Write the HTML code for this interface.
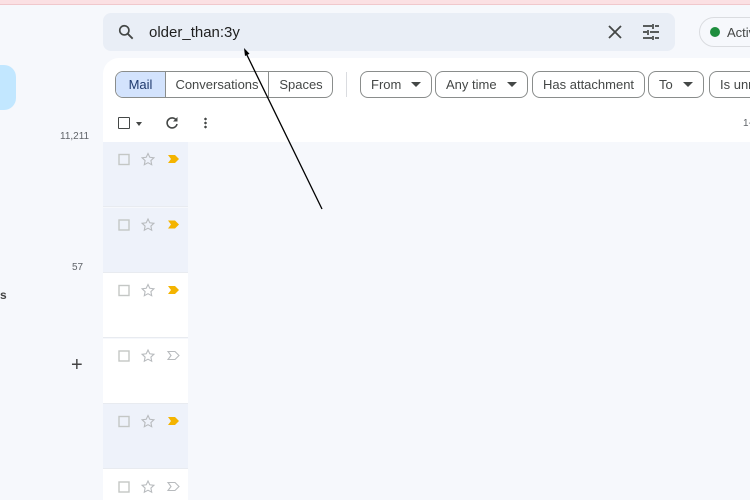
<!DOCTYPE html>
<html style="width:750px;height:500px;overflow:hidden"><head><style>
*{margin:0;padding:0;box-sizing:border-box}
body{width:750px;height:500px;overflow:hidden;background:#f6f8fc;font-family:"Liberation Sans",Arial,sans-serif;position:relative;color:#1f1f1f}
.a{position:absolute}
.chip{position:absolute;top:71px;height:27px;border:1px solid #8a8d8c;border-radius:8px;font-size:13px;color:#444746;line-height:25px;padding:0 10px;white-space:nowrap;background:#fff}
.tri{display:inline-block;width:0;height:0;border-left:5px solid transparent;border-right:5px solid transparent;border-top:5px solid #444746;margin-left:10px;vertical-align:2px}
.row{position:absolute;left:103px;width:85px;height:65px;border-bottom:1px solid #e8ebf0}
</style></head><body>
<div class="a" style="left:0;top:0;width:750px;height:5px;background:#fbe0e3;border-bottom:1px solid #f0c8cc"></div>
<div class="a" style="left:0;top:65px;width:16px;height:45px;background:#c2e7ff;border-radius:0 12px 12px 0"></div>
<div class="a" style="left:60px;top:131px;font-size:10px;color:#5f6368">11,211</div>
<div class="a" style="left:72px;top:262px;font-size:10px;color:#5f6368">57</div>
<div class="a" style="left:0;top:288px;font-size:12px;font-weight:bold;color:#444">s</div>
<div class="a" style="left:71px;top:354px;font-size:20px;color:#444;font-weight:300">+</div>
<div class="a" style="left:103px;top:13px;width:572px;height:38px;background:#e9eef6;border-radius:8px"></div>
<svg class="a" style="left:116px;top:22px" width="20" height="20" viewBox="0 0 24 24"><circle cx="10" cy="10" r="5.5" fill="none" stroke="#444746" stroke-width="2"/><path d="M14 14l6 6" stroke="#444746" stroke-width="2.2"/></svg>
<div class="a" style="left:149px;top:24px;font-size:15px;color:#1f1f1f">older_than:3y</div>
<svg class="a" style="left:607px;top:24px" width="16" height="16" viewBox="0 0 16 16"><path d="M2 2l12 12M14 2L2 14" stroke="#444746" stroke-width="1.8"/></svg>
<svg class="a" style="left:642px;top:23px" width="18" height="18" viewBox="0 0 18 18"><path d="M1 3h9M13 3h4M1 9h4M8 9h9M1 15h9M13 15h4M11 1v5M6 7v5M11 13v4" stroke="#444746" stroke-width="1.7"/></svg>
<div class="a" style="left:699px;top:17px;width:70px;height:30px;border:1px solid #dadce0;border-radius:15px;background:#f6f8fc"></div>
<div class="a" style="left:710px;top:27px;width:10px;height:10px;border-radius:50%;background:#1e8e3e"></div>
<div class="a" style="left:727px;top:25px;font-size:13px;color:#444746">Active</div>
<div class="a" style="left:103px;top:58px;width:660px;height:84px;background:#fff;border-radius:16px 0 0 0"></div>
<div class="a" style="left:115px;top:71px;width:218px;height:27px;border:1px solid #8a8d8c;border-radius:8px;overflow:hidden;font-size:13px;color:#444746;line-height:25px;background:#fff">
<span class="a" style="left:0;top:0;width:49px;height:25px;background:#d3e3fd;text-align:center;color:#1f3a6e">Mail</span>
<span class="a" style="left:49px;top:0;width:104px;height:25px;border-left:1px solid #8a8d8c;border-right:1px solid #8a8d8c;text-align:center">Conversations</span>
<span class="a" style="left:153px;top:0;width:64px;height:25px;text-align:center">Spaces</span>
</div>
<div class="a" style="left:346px;top:72px;width:1px;height:25px;background:#dadce0"></div>
<div class="chip" style="left:360px">From<span class="tri"></span></div>
<div class="chip" style="left:435px">Any time<span class="tri"></span></div>
<div class="chip" style="left:532px">Has attachment</div>
<div class="chip" style="left:648px">To<span class="tri"></span></div>
<div class="chip" style="left:709px;width:60px">Is unread</div>
<div class="a" style="left:118px;top:117px;width:12px;height:12px;border:1.8px solid #444746;border-radius:1px"></div>
<div class="a" style="left:136px;top:122px;border-left:3.5px solid transparent;border-right:3.5px solid transparent;border-top:4px solid #444746"></div>
<svg class="a" style="left:165px;top:116px" width="14" height="14" viewBox="0 0 14 14"><path d="M11.5 4.5A5 5 0 1 0 12 8" fill="none" stroke="#444746" stroke-width="1.6"/><path d="M12.5 1v4.5H8z" fill="#444746"/></svg>
<div class="a" style="left:204px;top:117px;width:3px;height:12px;background:radial-gradient(circle,#444746 1.2px,transparent 1.4px) 0 0/3px 4px"></div>
<div class="a" style="left:743px;top:118px;font-size:10px;color:#5f6368">1-</div>
<div class="row" style="top:142px;background:#eef2fa"></div>
<div class="row" style="top:208px;background:#eef2fa"></div>
<div class="row" style="top:273px;background:#fff"></div>
<div class="row" style="top:339px;background:#fff"></div>
<div class="row" style="top:404px;background:#eef2fa"></div>
<div class="row" style="top:469px;height:31px;background:#fff;border-bottom:none"></div>
<svg class="a" style="left:103px;top:142px" width="85" height="358" viewBox="0 0 85 358">
<defs>
<g id="r"><rect x="16" y="12.5" width="10" height="10" fill="none" stroke="#c4c7c5" stroke-width="1.4"/><path d="M45 11.5l1.8 3.8 4.1.5-3 2.8.8 4.1-3.7-2-3.7 2 .8-4.1-3-2.8 4.1-.5z" fill="none" stroke="#b8bbbe" stroke-width="1.1"/></g>
</defs>
<g><use href="#r"/><path d="M65 13h7l4 4-4 4h-7l3-4z" fill="#f4b400"/></g>
<g transform="translate(0,65.5)"><use href="#r"/><path d="M65 13h7l4 4-4 4h-7l3-4z" fill="#f4b400"/></g>
<g transform="translate(0,131)"><use href="#r"/><path d="M65 13h7l4 4-4 4h-7l3-4z" fill="#f4b400"/></g>
<g transform="translate(0,196.5)"><use href="#r"/><path d="M65 13h7l4 4-4 4h-7l3-4z" fill="none" stroke="#b8bbbe" stroke-width="1.1"/></g>
<g transform="translate(0,262)"><use href="#r"/><path d="M65 13h7l4 4-4 4h-7l3-4z" fill="#f4b400"/></g>
<g transform="translate(0,327.5)"><use href="#r"/><path d="M65 13h7l4 4-4 4h-7l3-4z" fill="none" stroke="#b8bbbe" stroke-width="1.1"/></g>
</svg>
<svg class="a" style="left:0;top:0" width="750" height="500"><path d="M322 209L245 51" stroke="#000" stroke-width="1.3"/><path d="M244 48l1 8 4.5-2.3z" fill="#000"/></svg>
</body></html>
